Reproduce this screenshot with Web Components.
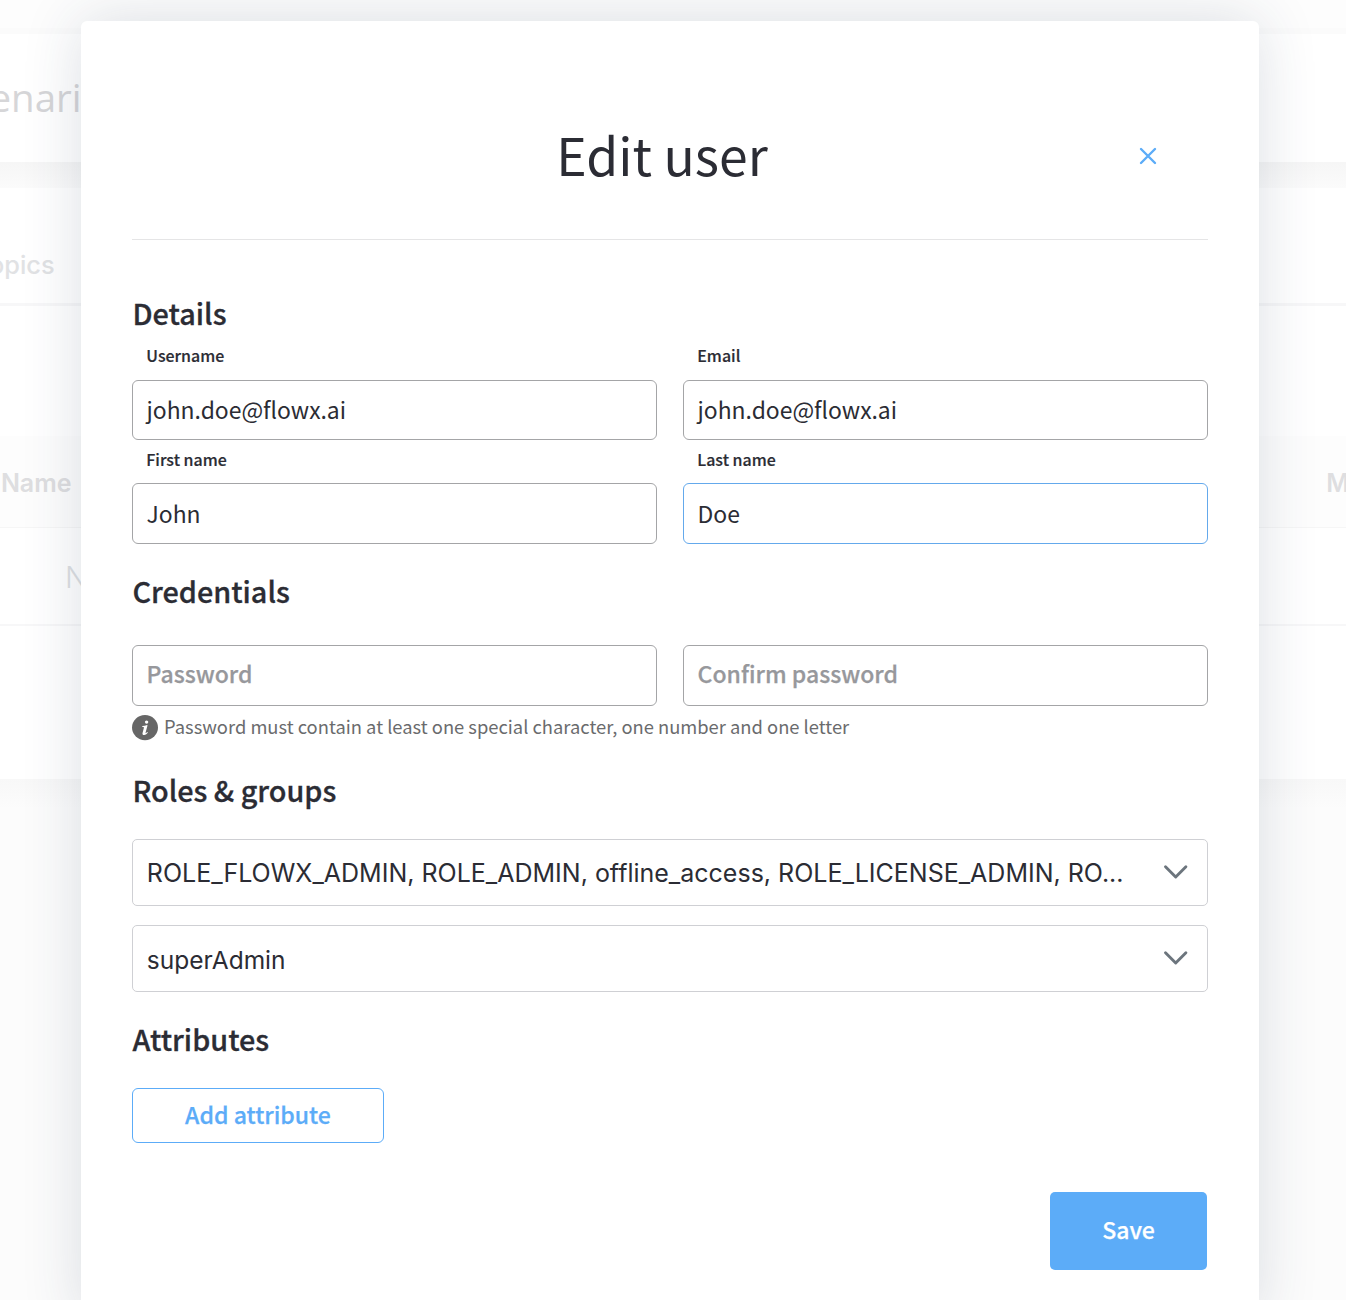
<!DOCTYPE html>
<html lang="en">
<head>
<meta charset="utf-8">
<title>Edit user</title>
<style>
  html, body { margin: 0; height: 1300px; overflow: hidden; background: #fcfcfc; }
  body {
    position: relative;
    --ui: "Noto Sans CJK JP", "Noto Sans", sans-serif;
    --body: Inter, "Liberation Sans", sans-serif;
    --ink: #2b2c34;
    --blue: #5cacf8;
    font-family: var(--ui);
    color: var(--ink);
  }
  .row { display: flex; gap: 26px; }
</style>
</head>
<body>

<backdrop-page></backdrop-page>

<edit-dialog heading="Edit user">
  <form-section heading="Details" style="--top: 53px">
    <div class="row" style="margin-top: 12px">
      <text-field label="Username" value="john.doe@flowx.ai" style="--h: 60px; --gap: 15px"></text-field>
      <text-field label="Email" value="john.doe@flowx.ai" style="--h: 60px; --gap: 15px"></text-field>
    </div>
    <div class="row" style="margin-top: 9px">
      <text-field label="First name" value="John" style="--lift: 1px"></text-field>
      <text-field label="Last name" value="Doe" style="--lift: 1px" focused></text-field>
    </div>
  </form-section>

  <form-section heading="Credentials" style="--top: 27px">
    <div class="row" style="margin-top: 34px">
      <text-field placeholder="Password"></text-field>
      <text-field placeholder="Confirm password"></text-field>
    </div>
    <info-hint>Password must contain at least one special character, one number and one letter</info-hint>
  </form-section>

  <form-section heading="Roles &amp; groups" style="--top: 29px">
    <select-box style="margin-top: 29px">ROLE_FLOWX_ADMIN, ROLE_ADMIN, offline_access, ROLE_LICENSE_ADMIN, RO...</select-box>
    <select-box style="margin-top: 19px; --size: 24.5px; --drop: 2px">superAdmin</select-box>
  </form-section>

  <form-section heading="Attributes" style="--top: 27px; --indent: .5px">
    <action-button kind="outline" style="margin-top: 29px">Add attribute</action-button>
  </form-section>

  <action-button kind="solid" slot="footer">Save</action-button>
</edit-dialog>

<script>
const define = (name, html, setup) => {
  const template = document.createElement('template');
  template.innerHTML = html;
  customElements.define(name, class extends HTMLElement {
    connectedCallback() {
      if (this.shadowRoot) return;
      const root = this.attachShadow({ mode: 'open' });
      root.append(template.content.cloneNode(true));
      if (setup) setup(this, root);
    }
  });
};

// Faded page that sits behind the dialog
define('backdrop-page', `
  <style>
    :host { display: flex; flex-direction: column; height: 1300px; overflow: hidden; font-family: var(--body); }
    .bar { height: 28px; background: #fdfdfd; }
    .edge { height: 6px; background: #fbfbfb; }
    .title { height: 128px; background: #fff; display: flex; }
    .title span { width: 81.5px; padding-top: 31px; font: 400 38.5px/64px "Open Sans", sans-serif; color: #d6d6d8; display: flex; justify-content: flex-end; }
    .gap { height: 26px; background: linear-gradient(#f6f6f6, #fbfbfb); }
    .card { height: 591px; background: #fff; display: flex; flex-direction: column; }
    .tabs { height: 115px; display: flex; border-bottom: 3px solid #f7f7f8; }
    .tabs span { width: 54.5px; padding-top: 60px; font: 500 25.3px/34px var(--body); color: #e1e2e4; display: flex; justify-content: flex-end; }
    .space { height: 130px; }
    .head { height: 92px; background: #fdfdfd; border-bottom: 1px solid #f6f6f6; box-sizing: border-box; display: flex; font: 600 25px/34px var(--body); color: #dedee0; padding: 30px 0 0 .9px; }
    .head b { font-weight: 600; margin-left: 1254.6px; }
    .row { height: 98px; box-sizing: border-box; border-bottom: 2px solid #f7f7f8; padding: 32px 0 0 65px; font: 300 30px/34px var(--body); color: #dddfe2; }
    .foot { height: 30px; background: linear-gradient(#f8f8f8, #fcfcfc); }
  </style>
  <div class="bar"></div><div class="edge"></div>
  <div class="title"><span>enari</span></div>
  <div class="gap"></div>
  <div class="card">
    <div class="tabs"><span>opics</span></div>
    <div class="space"></div>
    <div class="head"><span>Name</span><b>M</b></div>
    <div class="row">N</div>
  </div>
  <div class="foot"></div>
`);

define('edit-dialog', `
  <style>
    :host { position: absolute; left: 81px; top: 21px; width: 1178px; height: 1300px; box-sizing: border-box; padding: 0 51px; background: #fff; border-radius: 6px; box-shadow: 0 0 60px rgba(40, 55, 85, .16); display: flex; flex-direction: column; }
    header { display: flex; height: 219px; box-sizing: border-box; border-bottom: 1px solid #e5e5e6; padding: 95px 51px 0 53px; }
    h1 { flex: 1; margin: 0; text-align: center; font-size: 51.7px; line-height: 76px; font-weight: 400; }
    svg { width: 18px; height: 18px; margin-top: 31px; display: block; }
    footer { display: flex; justify-content: flex-end; margin-top: 49px; padding-right: 1px; }
  </style>
  <header>
    <h1></h1>
    <svg viewBox="0 0 18 18" fill="none" stroke="#5cacf8" stroke-width="2.4" stroke-linecap="round"><path d="M2 2l14 14M16 2L2 16"/></svg>
  </header>
  <slot></slot>
  <footer><slot name="footer"></slot></footer>
`, (el, root) => { root.querySelector('h1').textContent = el.getAttribute('heading'); });

define('form-section', `
  <style>
    :host { display: flex; flex-direction: column; padding-top: var(--top); }
    h2 { margin: 0; padding-left: var(--indent, .4px); font-size: 28.8px; line-height: 40px; font-weight: 500; -webkit-text-stroke: .3px; }
  </style>
  <h2></h2>
  <slot></slot>
`, (el, root) => { root.querySelector('h2').textContent = el.getAttribute('heading'); });

define('text-field', `
  <style>
    :host { display: flex; flex-direction: column; flex: 1; gap: var(--gap, 14px); }
    label { padding-left: 14.3px; font-size: 15.95px; line-height: 20px; font-weight: 500; -webkit-text-stroke: .2px; }
    .box { height: var(--h, 61px); box-sizing: border-box; border: 1px solid #a4a5a7; border-radius: 6px; padding: 0 13.5px var(--lift, 2px); display: flex; align-items: center; font-size: 22.92px; line-height: 34px; }
    .box.hint { color: #97989c; font-weight: 500; font-size: 23px; padding-bottom: 5px; padding-left: 13.6px; -webkit-text-stroke: .25px; }
    :host([focused]) .box { border-color: #64a9ec; }
  </style>
  <label></label>
  <div class="box"></div>
`, (el, root) => {
  const label = root.querySelector('label'), box = root.querySelector('.box');
  if (el.hasAttribute('label')) label.textContent = el.getAttribute('label');
  else label.remove();
  box.textContent = el.getAttribute('value') || el.getAttribute('placeholder');
  box.classList.toggle('hint', !el.hasAttribute('value'));
});

define('info-hint', `
  <style>
    :host { display: flex; align-items: center; gap: 6px; height: 26px; margin-top: 9px; color: #6a6b6d; font-size: 18.35px; line-height: 26px; }
    svg { width: 26px; height: 26px; flex: none; }
    span { margin-top: -4px; white-space: nowrap; }
  </style>
  <svg viewBox="0 0 26 26"><ellipse cx="13" cy="12.6" rx="13" ry="12.6" fill="#666"/><g fill="#fff"><circle cx="14.6" cy="7.1" r="1.7"/><path d="M10.4 11.1c1.6-.1 3-.5 4.7-1l.4.3-1.9 7.1c-.2.8.1.9.5.6.4-.2.7-.6 1.1-1l.7.5c-1 1.5-2.2 2.4-3.7 2.4-1.5 0-2-.9-1.6-2.3l1.2-4.5c.2-.8 0-1.1-.6-1.1h-1z"/></g></svg>
  <span><slot></slot></span>
`);

define('select-box', `
  <style>
    :host { display: flex; align-items: center; justify-content: space-between; height: 67px; box-sizing: border-box; border: 1px solid #cfd0d4; border-radius: 5px; padding: 0 19px 0 13.8px; font-family: var(--body); font-size: var(--size, 25px); line-height: 34px; }
    span { white-space: nowrap; padding-top: var(--drop, 1px); }
    svg { width: 25px; height: 16px; flex: none; margin-top: -1px; }
  </style>
  <span><slot></slot></span>
  <svg viewBox="0 0 25 16" fill="none" stroke="#6c757d" stroke-width="2.9" stroke-linecap="round" stroke-linejoin="round"><path d="M2.5 2.8L12.7 13L22.9 2.8"/></svg>
`);

define('action-button', `
  <style>
    :host { display: flex; align-items: center; justify-content: center; box-sizing: border-box; border-radius: 6px; font-size: 23.05px; line-height: 34px; font-weight: 500; -webkit-text-stroke: .25px; }
    :host([kind="outline"]) { width: 252px; height: 55px; border: 1px solid var(--blue); color: var(--blue); padding-bottom: 3.5px; }
    :host([kind="solid"]) { width: 157px; height: 78px; background: var(--blue); color: #fff; padding-bottom: 4px; border-radius: 5px; }
  </style>
  <slot></slot>
`);
</script>
</body>
</html>
